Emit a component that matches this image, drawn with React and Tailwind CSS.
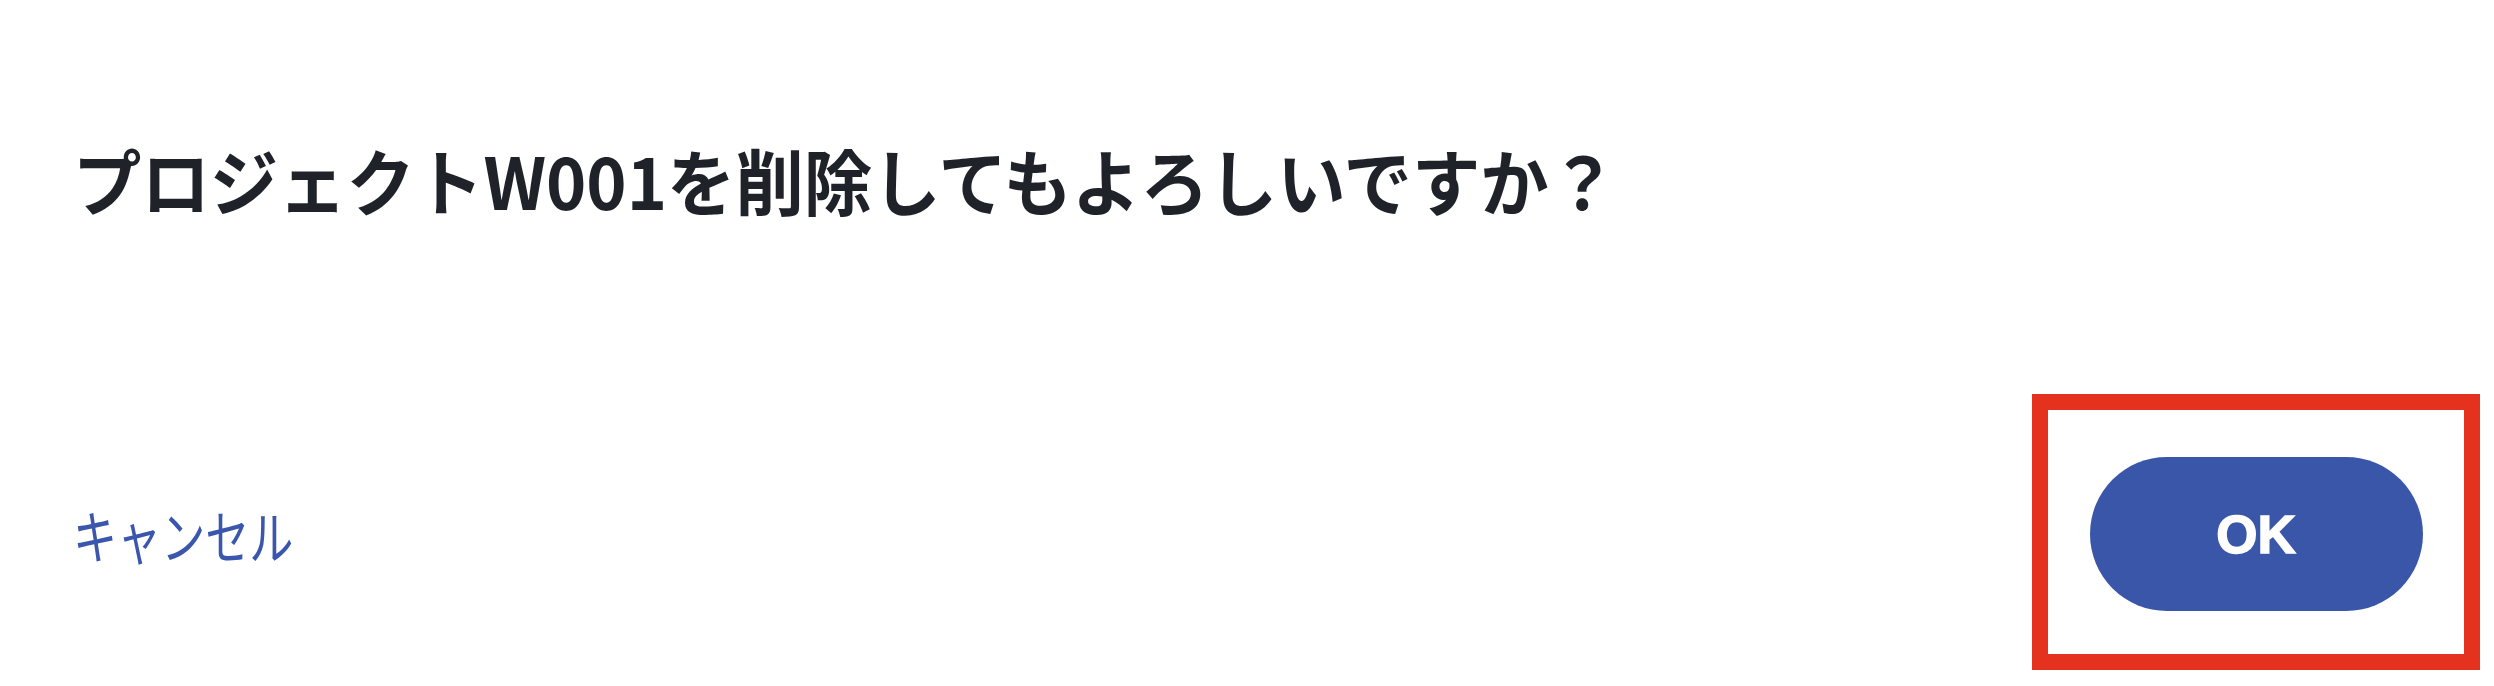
export default function App() {
  return (
    <div className="w-[2494px] h-[686px] bg-white flex flex-col overflow-hidden" style={{ fontFamily: '"Noto Sans CJK JP", "Noto Sans", sans-serif' }}>
      <div className="pl-[73px] pt-[143px] h-[394px]">
        <h1 className="text-[72px] leading-none font-bold text-[#1f2329] whitespace-nowrap origin-left scale-x-[0.95]">
          プロジェクトW001を削除してもよろしいですか？
        </h1>
      </div>
      <div className="flex items-center justify-between pl-[73px] pr-[14px]">
        <button className="text-[58px] leading-none text-[#3b57ad] whitespace-nowrap origin-left scale-x-[0.76] mt-[4px]">
          キャンセル
        </button>
        <div className="w-[448px] h-[276px] border-[16px] border-[#e5321f] flex items-center justify-center">
          <button className="w-[333px] h-[154px] rounded-full bg-[#3a56a8] text-white text-[53px] font-bold leading-none font-['Liberation_Sans',sans-serif] [-webkit-text-stroke:1.5px_white] mt-[4px]">
            OK
          </button>
        </div>
      </div>
    </div>
  );
}
